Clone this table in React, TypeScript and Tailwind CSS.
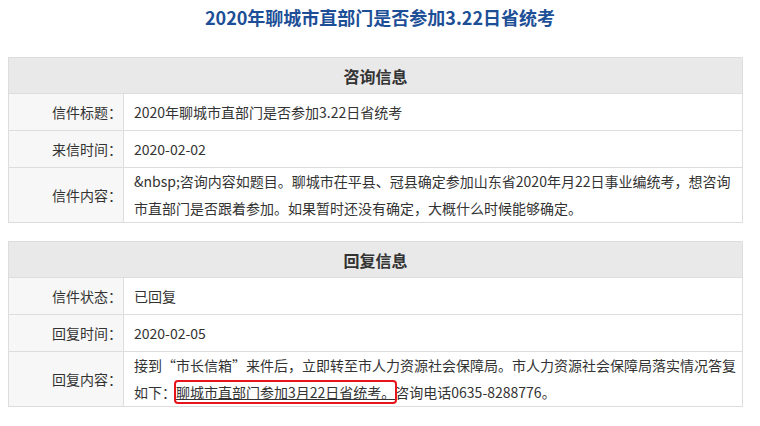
import React from "react";

const font = { fontFamily: '"Microsoft YaHei", "Noto Sans CJK SC", "Noto Sans", sans-serif' };

function Row({ label, children, last }: { label: string; children: React.ReactNode; last?: boolean }) {
  return (
    <div className={`flex ${last ? "" : "border-b border-[#dddddd]"}`}>
      <div className="w-[115px] shrink-0 bg-[#f7f7f7] border-r border-[#dddddd] flex items-center justify-end pr-[1px] text-[14px] text-[#333]">
        {label}
      </div>
      <div className="flex-1 min-h-[36px] flex items-center pl-[10px] pr-[3px] text-[14px] leading-[27px] text-[#333]">
        <div>{children}</div>
      </div>
    </div>
  );
}

function Table({ title, children }: { title: string; children: React.ReactNode }) {
  return (
    <div className="border border-[#dddddd] bg-white">
      <div className="h-[36px] bg-[#e9e9e9] border-b border-[#dddddd] flex items-center justify-center text-[16px] font-bold text-[#333]">
        {title}
      </div>
      {children}
    </div>
  );
}

export default function App() {
  return (
    <div className="w-[760px] h-[426px] bg-white overflow-hidden" style={font}>
      <div className="h-[57px] pt-[4px] text-center text-[18px] font-bold text-[#1d4f97] leading-[26px]">
        2020年聊城市直部门是否参加3.22日省统考
      </div>
      <div className="pl-[8px] w-[743px] flex flex-col gap-[18px]">
        <Table title="咨询信息">
          <Row label="信件标题：">2020年聊城市直部门是否参加3.22日省统考</Row>
          <Row label="来信时间：">2020-02-02</Row>
          <Row label="信件内容：" last>
            &amp;nbsp;咨询内容如题目。聊城市茌平县、冠县确定参加山东省2020年月22日事业编统考，想咨询市直部门是否跟着参加。如果暂时还没有确定，大概什么时候能够确定。
          </Row>
        </Table>
        <Table title="回复信息">
          <Row label="信件状态：">已回复</Row>
          <Row label="回复时间：">2020-02-05</Row>
          <Row label="回复内容：" last>
            接到“市长信箱”来件后，立即转至市人力资源社会保障局。市人力资源社会保障局落实情况答复如下：<span className="underline outline-2 outline-[#e8141b] rounded-[2px]">聊城市直部门参加3月22日省统考。</span>咨询电话0635-8288776。
          </Row>
        </Table>
      </div>
    </div>
  );
}
